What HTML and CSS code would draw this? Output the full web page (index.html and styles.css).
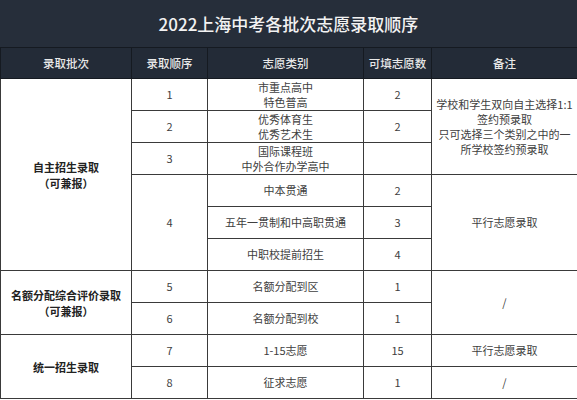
FILE: index.html
```html
<!DOCTYPE html>
<html lang="zh-CN">
<head>
<meta charset="utf-8">
<title>2022上海中考各批次志愿录取顺序</title>
<link rel="stylesheet" href="styles.css">
</head>
<body>
<div class="sheet">
  <div class="title">2022上海中考各批次志愿录取顺序</div>
  <table class="grid">
    <colgroup>
      <col class="c1"><col class="c2"><col class="c3"><col class="c4"><col class="c5">
    </colgroup>
    <thead>
      <tr class="head">
        <th>录取批次</th><th>录取顺序</th><th>志愿类别</th><th>可填志愿数</th><th>备注</th>
      </tr>
    </thead>
    <tbody>
      <tr>
        <td rowspan="6" class="batch">自主招生录取<br>（可兼报）</td>
        <td>1</td>
        <td class="two">市重点高中<br>特色普高</td>
        <td>2</td>
        <td rowspan="3" class="note">学校和学生双向自主选择1:1<br>签约预录取<br>只可选择三个类别之中的一<br>所学校签约预录取</td>
      </tr>
      <tr>
        <td>2</td>
        <td class="two">优秀体育生<br>优秀艺术生</td>
        <td>2</td>
      </tr>
      <tr>
        <td>3</td>
        <td class="two">国际课程班<br>中外合作办学高中</td>
        <td></td>
      </tr>
      <tr>
        <td rowspan="3">4</td>
        <td>中本贯通</td>
        <td>2</td>
        <td rowspan="3">平行志愿录取</td>
      </tr>
      <tr>
        <td>五年一贯制和中高职贯通</td>
        <td>3</td>
      </tr>
      <tr>
        <td>中职校提前招生</td>
        <td>4</td>
      </tr>
      <tr>
        <td rowspan="2" class="batch">名额分配综合评价录取<br>（可兼报）</td>
        <td>5</td>
        <td>名额分配到区</td>
        <td>1</td>
        <td rowspan="2">/</td>
      </tr>
      <tr>
        <td>6</td>
        <td>名额分配到校</td>
        <td>1</td>
      </tr>
      <tr>
        <td rowspan="2" class="batch">统一招生录取</td>
        <td>7</td>
        <td>1-15志愿</td>
        <td>15</td>
        <td>平行志愿录取</td>
      </tr>
      <tr>
        <td>8</td>
        <td>征求志愿</td>
        <td>1</td>
        <td>/</td>
      </tr>
    </tbody>
  </table>
</div>
</body>
</html>
```

FILE: styles.css
```css
html, body {
  margin: 0;
  padding: 0;
  background: #ffffff;
}

body {
  font-family: "Noto Sans CJK SC", "Noto Sans", "Liberation Sans", sans-serif;
  width: 577px;
  height: 400px;
  overflow: hidden;
}

.sheet {
  width: 577px;
}

.title {
  height: 47px;
  background: #262e3a;
  border-bottom: 1px solid #151a21;
  color: #f2f2f2;
  font-size: 17px;
  font-weight: 500;
  display: flex;
  align-items: center;
  justify-content: center;
  box-sizing: content-box;
}

.grid {
  width: 577px;
  border-collapse: collapse;
  table-layout: fixed;
}

.c1 { width: 131px; }
.c2 { width: 76px; }
.c3 { width: 156px; }
.c4 { width: 68px; }
.c5 { width: 146px; }

.grid th,
.grid td {
  border: 1px solid #3a3a3a;
  padding: 0;
  text-align: center;
  vertical-align: middle;
}

.head th {
  height: 30px;
  background: #232b37;
  color: #e8e8e8;
  font-size: 11.5px;
  font-weight: 500;
  border-color: #151a21;
  border-top: none;
}

.grid tbody tr {
  height: 32px;
}

.grid td {
  font-size: 11px;
  line-height: 15px;
  color: #404040;
}

.grid td.two {
  line-height: 15px;
}

.grid td.note {
  line-height: 15px;
}

.grid td.batch {
  font-weight: 700;
  color: #222222;
  line-height: 16px;
}
```
